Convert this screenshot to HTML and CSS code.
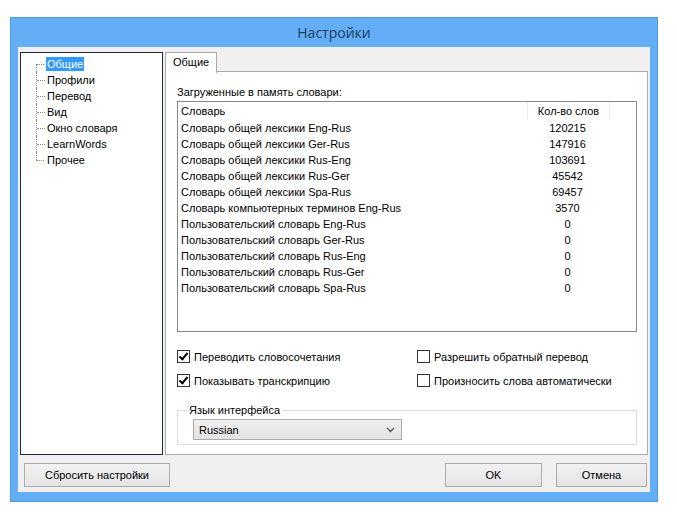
FILE: index.html
```html
<!DOCTYPE html>
<html lang="ru">
<head>
    <meta charset="UTF-8">
    <title>Настройки</title>
    <link rel="stylesheet" href="styles.css">
</head>
<body>
    <div class="window">
        <div class="title">Настройки</div>
        <div class="client">
            <div class="main">
                <ul class="tree">
                    <li><span class="selected">Общие</span></li>
                    <li><span>Профили</span></li>
                    <li><span>Перевод</span></li>
                    <li><span>Вид</span></li>
                    <li><span>Окно словаря</span></li>
                    <li><span>LearnWords</span></li>
                    <li class="last"><span>Прочее</span></li>
                </ul>
                <div class="tabs">
                    <div class="tab-strip">
                        <div class="tab">Общие</div>
                    </div>
                    <div class="panel">
                        <div class="caption">Загруженные в память словари:</div>
                        <div class="listview">
                            <div class="lv-row lv-head">
                                <span class="col-name">Словарь</span>
                                <span class="col-count">Кол-во слов</span>
                                <span class="col-rest"></span>
                            </div>
                            <div class="lv-row"><span class="col-name">Словарь общей лексики Eng-Rus</span><span class="col-count">120215</span></div>
                            <div class="lv-row"><span class="col-name">Словарь общей лексики Ger-Rus</span><span class="col-count">147916</span></div>
                            <div class="lv-row"><span class="col-name">Словарь общей лексики Rus-Eng</span><span class="col-count">103691</span></div>
                            <div class="lv-row"><span class="col-name">Словарь общей лексики Rus-Ger</span><span class="col-count">45542</span></div>
                            <div class="lv-row"><span class="col-name">Словарь общей лексики Spa-Rus</span><span class="col-count">69457</span></div>
                            <div class="lv-row"><span class="col-name">Словарь компьютерных терминов Eng-Rus</span><span class="col-count">3570</span></div>
                            <div class="lv-row"><span class="col-name">Пользовательский словарь Eng-Rus</span><span class="col-count">0</span></div>
                            <div class="lv-row"><span class="col-name">Пользовательский словарь Ger-Rus</span><span class="col-count">0</span></div>
                            <div class="lv-row"><span class="col-name">Пользовательский словарь Rus-Eng</span><span class="col-count">0</span></div>
                            <div class="lv-row"><span class="col-name">Пользовательский словарь Rus-Ger</span><span class="col-count">0</span></div>
                            <div class="lv-row"><span class="col-name">Пользовательский словарь Spa-Rus</span><span class="col-count">0</span></div>
                        </div>
                        <div class="options">
                            <label class="check"><span class="box checked"></span>Переводить словосочетания</label>
                            <label class="check"><span class="box"></span>Разрешить обратный перевод</label>
                            <label class="check"><span class="box checked"></span>Показывать транскрипцию</label>
                            <label class="check"><span class="box"></span>Произносить слова автоматически</label>
                        </div>
                        <fieldset class="group">
                            <legend>Язык интерфейса</legend>
                            <div class="combo">
                                <span>Russian</span>
                                <svg width="9" height="6" viewBox="0 0 9 6"><path d="M1 1 L4.5 4.5 L8 1" fill="none" stroke="#555" stroke-width="1.3"/></svg>
                            </div>
                        </fieldset>
                    </div>
                </div>
            </div>
            <div class="buttons">
                <button class="btn btn-reset">Сбросить настройки</button>
                <div class="spacer"></div>
                <button class="btn btn-ok">OK</button>
                <button class="btn btn-cancel">Отмена</button>
            </div>
        </div>
    </div>
</body>
</html>
```

FILE: styles.css
```css
body {
    margin: 0;
    padding: 0;
    background-color: #ffffff;
    font-family: "Liberation Sans", Arial, sans-serif;
    font-size: 11px;
    color: #000;
}

.window {
    margin: 17px 0 0 10px;
    width: 646px;
    height: 483px;
    background-color: #63aef5;
    border: 1px solid #4e98dc;
    display: flex;
    flex-direction: column;
}

.title {
    height: 29px;
    line-height: 30px;
    text-align: center;
    font-family: "Open Sans", "Noto Sans", sans-serif;
    font-size: 14px;
    color: #1d3b5e;
}

.client {
    margin: 0 7px;
    height: 445px;
    background-color: #f1eff0;
    display: flex;
    flex-direction: column;
}

.main {
    display: flex;
    gap: 2px;
    padding: 5px 2px 0 2px;
    height: 403px;
}

/* tree on the left */
.tree {
    list-style: none;
    margin: 0;
    width: 126px;
    flex: none;
    padding: 3px 0 0 15px;
    background-color: #fff;
    border: 1px solid #1c2b3e;
}

.tree li {
    position: relative;
    height: 16px;
    line-height: 16px;
    padding-left: 9px;
    border-left: 1px dotted #888;
}

.tree li.last {
    border-left: none;
    padding-left: 10px;
}

.tree li.last::after {
    content: "";
    position: absolute;
    left: 0;
    top: 0;
    height: 8px;
    border-left: 1px dotted #888;
}

.tree li:first-child {
    border-left: none;
    padding-left: 10px;
}

.tree li:first-child::after {
    content: "";
    position: absolute;
    left: 0;
    top: 8px;
    height: 8px;
    border-left: 1px dotted #888;
}

.tree li::before {
    content: "";
    position: absolute;
    left: 0;
    top: 8px;
    width: 8px;
    border-top: 1px dotted #888;
}

.tree span {
    padding: 1px 1px;
}

.tree .selected {
    background-color: #3399ff;
    color: #fff;
}

/* tabs */
.tabs {
    flex: 1;
    display: flex;
    flex-direction: column;
}

.tab-strip {
    display: flex;
    height: 19px;
}

.tab {
    width: 48px;
    height: 20px;
    line-height: 19px;
    padding-left: 2px;
    text-align: left;
    text-indent: 5px;
    background-color: #fff;
    border: 1px solid #acacac;
    border-bottom: none;
    position: relative;
    z-index: 1;
    font-size: 11px;
}

.panel {
    flex: 1;
    background-color: #fff;
    border: 1px solid #acacac;
    padding: 12px 10px 0 11px;
}

.caption {
    height: 16px;
    line-height: 16px;
}

.listview {
    margin-top: 1px;
    height: 229px;
    border: 1px solid #828790;
}

.lv-row {
    display: flex;
    height: 16px;
    line-height: 16px;
}

.lv-head {
    height: 18px;
    line-height: 18px;
}

.col-name {
    width: 346px;
    padding-left: 3px;
}

.col-count {
    width: 81px;
    text-align: center;
}

.lv-head .col-count {
    border-left: 1px solid #ececec;
    border-right: 1px solid #ececec;
}

.col-rest {
    flex: 1;
}

/* check boxes */
.options {
    display: grid;
    grid-template-columns: 240px 1fr;
    row-gap: 11px;
    margin-top: 18px;
    margin-left: 0;
}

.check {
    display: flex;
    align-items: center;
    gap: 4px;
    height: 13px;
}

.box {
    width: 11px;
    height: 11px;
    border: 1px solid #333;
    background-color: #fff;
    position: relative;
}

.box.checked::after {
    content: "";
    position: absolute;
    left: 3px;
    top: 0px;
    width: 3px;
    height: 7px;
    border: solid #000;
    border-width: 0 2px 2px 0;
    transform: rotate(40deg);
}

/* group box */
.group {
    margin: 17px 0 0 0;
    padding: 3px 15px 5px 15px;
    height: 31px;
    border: 1px solid #dcdcdc;
    border-radius: 0;
}

.group legend {
    padding: 0 2px;
    margin-left: -6px;
    line-height: 12px;
}

.combo {
    width: 196px;
    height: 19px;
    padding: 0 6px 0 5px;
    border: 1px solid #acacac;
    background: linear-gradient(#efefef, #e3e3e3);
    display: flex;
    align-items: center;
    justify-content: space-between;
}

/* bottom buttons */
.buttons {
    display: flex;
    gap: 14px;
    padding: 8px 3px 0 6px;
}

.spacer {
    flex: 1;
}

.btn {
    height: 24px;
    font-family: "Liberation Sans", Arial, sans-serif;
    font-size: 11px;
    background: linear-gradient(#f2f2f2, #e4e4e4);
    border: 1px solid #acacac;
    border-radius: 0;
    padding: 0;
}

.btn-reset {
    width: 146px;
}

.btn-ok {
    width: 97px;
}

.btn-cancel {
    width: 91px;
}
```
